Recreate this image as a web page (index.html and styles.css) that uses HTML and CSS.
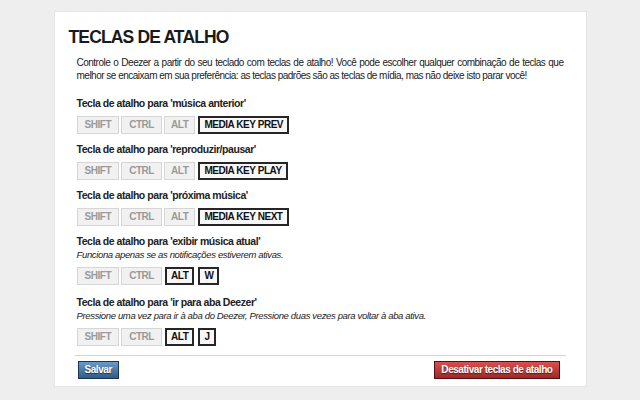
FILE: index.html
```html
<!DOCTYPE html>
<html lang="pt">
<head>
<meta charset="utf-8">
<link rel="stylesheet" href="styles.css">
</head>
<body>
<div class="card">
  <h1 class="title">TECLAS DE ATALHO</h1>
  <div class="content">
    <p class="intro">Controle o Deezer a partir do seu teclado com teclas de atalho! Você pode escolher qualquer combinação de teclas que melhor se encaixam em sua preferência: as teclas padrões são as teclas de mídia, mas não deixe isto parar você!</p>

    <div class="group">
      <div class="label">Tecla de atalho para 'música anterior'</div>
      <div class="keys">
        <span class="key off">SHIFT</span><span class="key off">CTRL</span><span class="key off">ALT</span><span class="key on">MEDIA KEY PREV</span>
      </div>
    </div>

    <div class="group">
      <div class="label">Tecla de atalho para 'reproduzir/pausar'</div>
      <div class="keys">
        <span class="key off">SHIFT</span><span class="key off">CTRL</span><span class="key off">ALT</span><span class="key on">MEDIA KEY PLAY</span>
      </div>
    </div>

    <div class="group">
      <div class="label">Tecla de atalho para 'próxima música'</div>
      <div class="keys">
        <span class="key off">SHIFT</span><span class="key off">CTRL</span><span class="key off">ALT</span><span class="key on">MEDIA KEY NEXT</span>
      </div>
    </div>

    <div class="group">
      <div class="label">Tecla de atalho para 'exibir música atual'</div>
      <div class="note">Funciona apenas se as notificações estiverem ativas.</div>
      <div class="keys">
        <span class="key off">SHIFT</span><span class="key off">CTRL</span><span class="key on">ALT</span><span class="key on">W</span>
      </div>
    </div>

    <div class="group">
      <div class="label">Tecla de atalho para 'ir para aba Deezer'</div>
      <div class="note">Pressione uma vez para ir à aba do Deezer, Pressione duas vezes para voltar à aba ativa.</div>
      <div class="keys">
        <span class="key off">SHIFT</span><span class="key off">CTRL</span><span class="key on">ALT</span><span class="key on">J</span>
      </div>
    </div>
  </div>
  <div class="footer">
    <button class="btn btn-save">Salvar</button>
    <button class="btn btn-off">Desativar teclas de atalho</button>
  </div>
</div>
</body>
</html>
```
FILE: styles.css
```css
html, body {
  margin: 0;
  padding: 0;
  background: #eeeeee;
  font-family: "Liberation Sans", Arial, sans-serif;
  color: #222;
}
body {
  padding-top: 11px;
}
.card {
  width: 531px;
  margin: 0 auto;
  background: #fff;
  border: 1px solid #e4e4e4;
  padding: 15px 0 7px 0;
  box-sizing: content-box;
}
.title {
  margin: 0 0 0 14px;
  font-size: 17.5px;
  letter-spacing: -0.85px;
  line-height: 21px;
  font-weight: bold;
  color: #1a1a1a;
}
.content {
  padding: 0 22px 0 22px;
}
.intro {
  margin: 8px 0 15px;
  font-size: 10px;
  letter-spacing: -0.5px;
  line-height: 13px;
  text-align: justify;
  color: #222;
}
.group {
  margin-bottom: 9px;
}
.group:nth-child(5) {
  margin-bottom: 11px;
}
.label {
  font-size: 10.5px;
  letter-spacing: -0.45px;
  line-height: 13px;
  font-weight: bold;
  color: #222;
}
.note {
  font-size: 9.5px;
  letter-spacing: -0.35px;
  line-height: 13px;
  font-style: italic;
  color: #222;
}
.keys {
  display: flex;
  gap: 2px;
  margin-top: 6px;
}
.key {
  display: inline-block;
  box-sizing: border-box;
  height: 18px;
  line-height: 16px;
  padding: 0 7px;
  font-size: 10px;
  letter-spacing: -0.45px;
  font-weight: bold;
  text-align: center;
}
.key.off {
  background: #f1f1f1;
  color: #9a9a9a;
  border: 1px solid #d6d6d6;
}
.key.off + .key.off + .key.off {
  padding: 0 6px;
}
.key.on {
  background: #f7f7f7;
  color: #111;
  border: 2px solid #262626;
  line-height: 14px;
  padding: 0 4px;
  margin-left: 1px;
}
.key.on + .key.on {
  margin-left: 2px;
}
.footer {
  margin: 9px 20px 0 20px;
  border-top: 1px solid #d4d4d4;
  padding: 5px 6px 0 3px;
  display: flex;
  justify-content: space-between;
  align-items: center;
}
.btn {
  font-family: "Liberation Sans", Arial, sans-serif;
  font-size: 10px;
  letter-spacing: -0.45px;
  font-weight: bold;
  color: #fff;
  height: 18px;
  line-height: 16px;
  padding: 0 6px;
  text-shadow: 0 1px 1px rgba(0,0,0,0.55);
  cursor: pointer;
}
.btn-save {
  background: linear-gradient(#6a9ac8, #2f5d88);
  border: 1px solid #1c3550;
}
.btn-off {
  background: linear-gradient(#d85050, #a02828);
  border: 1px solid #4e1010;
}
```
